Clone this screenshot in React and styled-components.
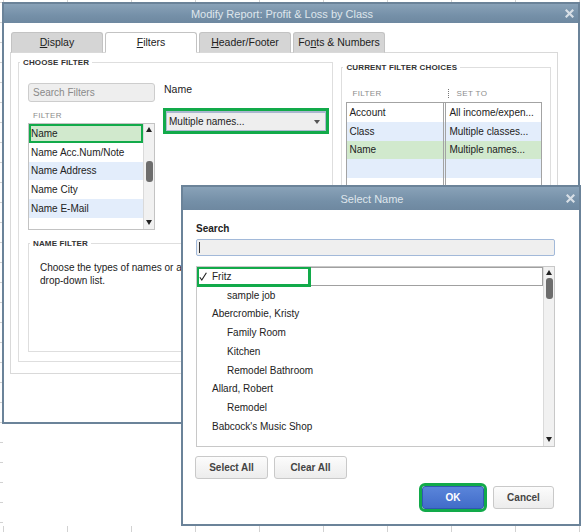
import React from 'react';
import styled, { createGlobalStyle } from 'styled-components';

const FONT = '"Liberation Sans", Arial, Helvetica, sans-serif';
const GREEN = '#12aa4a';

const tones = { plain: '#ffffff', blue: '#e3edfb', picked: '#d1e9cd' };

const filterChoices = [
  { label: 'Name', tone: 'picked' },
  { label: 'Name Acc.Num/Note', tone: 'plain' },
  { label: 'Name Address', tone: 'blue' },
  { label: 'Name City', tone: 'plain' },
  { label: 'Name E-Mail', tone: 'blue' },
];

const currentChoices = [
  { filter: 'Account', value: 'All income/expen...', tone: 'plain' },
  { filter: 'Class', value: 'Multiple classes...', tone: 'blue' },
  { filter: 'Name', value: 'Multiple names...', tone: 'picked' },
  { filter: '', value: '', tone: 'blue' },
  { filter: '', value: '', tone: 'plain' },
  { filter: '', value: '', tone: 'blue' },
];

const names = [
  { label: 'Fritz', level: 0, checked: true },
  { label: 'sample job', level: 1 },
  { label: 'Abercrombie, Kristy', level: 0 },
  { label: 'Family Room', level: 1 },
  { label: 'Kitchen', level: 1 },
  { label: 'Remodel Bathroom', level: 1 },
  { label: 'Allard, Robert', level: 0 },
  { label: 'Remodel', level: 1 },
  { label: "Babcock's Music Shop", level: 0 },
];

const GlobalStyle = createGlobalStyle`
  html, body {
    margin: 0;
    padding: 0;
  }
  body {
    font-family: ${FONT};
    font-size: 10px;
    color: #222;
    background: #fff;
  }
`;

// sheet behind the dialogs: only the gridline stubs at its edges show
const Desktop = styled.div`
  position: relative;
  width: 583px;
  height: 532px;
  overflow: hidden;
  background-color: #fff;
  background-image:
    linear-gradient(to bottom, #d2d2d2 1px, transparent 1px),
    linear-gradient(to right, #d2d2d2 1px, transparent 1px),
    linear-gradient(to right, #d2d2d2 1px, transparent 1px);
  background-size: 3px 20px, 64px 2px, 64px 6px;
  background-position: 0 2px, 3px 0, 3px 526px;
  background-repeat: repeat-y, repeat-x, repeat-x;
`;

const Window = styled.section`
  position: absolute;
  left: ${(p) => p.$x}px;
  top: ${(p) => p.$y}px;
  width: ${(p) => p.$w}px;
  height: ${(p) => p.$h}px;
  box-sizing: border-box;
  border: 2px solid #6b8399;
  background: #fff;
  display: flex;
  flex-direction: column;
`;

const TitleBar = styled.header`
  flex: none;
  height: ${(p) => p.$h}px;
  display: flex;
  align-items: center;
  background: linear-gradient(#89a2b8, #7590a8 60%, #6e88a0);
  color: #dfe6ec;
  font-size: 11px;
`;

const TitleText = styled.span`
  flex: 1;
  text-align: center;
`;

const CloseBox = styled.span`
  width: 18px;
  flex: none;
  display: flex;
  justify-content: center;
  align-items: center;
`;

const DialogBody = styled.div`
  flex: 1;
  padding: 9px 6px 0;
  display: flex;
  flex-direction: column;
`;

const TabStrip = styled.div`
  display: flex;
  gap: 2px;
  padding-left: 1px;
  height: 20px;
  position: relative;
  z-index: 1;
`;

const Tab = styled.div`
  width: 92px;
  height: 21px;
  box-sizing: border-box;
  border: 1px solid #c3c3c3;
  border-bottom: 1px solid ${(p) => (p.$active ? '#fff' : '#d9d9d9')};
  border-radius: 3px 3px 0 0;
  background: ${(p) => (p.$active ? '#fff' : '#d5d5d5')};
  display: flex;
  align-items: center;
  justify-content: center;
  padding-bottom: 2px;
  font-size: 10.5px;
  color: #222;
`;

const TabPanel = styled.div`
  width: 548px;
  height: 322px;
  box-sizing: border-box;
  border: 1px solid #d9d9d9;
  padding: 5px 6px 0 7px;
  display: flex;
  align-items: flex-start;
  gap: 8px;
`;

const GroupBox = styled.fieldset`
  margin: ${(p) => p.$margin || 0};
  padding: 0;
  min-width: 0;
  box-sizing: border-box;
  width: ${(p) => p.$w}px;
  height: ${(p) => p.$h}px;
  border: 1px solid #dedede;
`;

const Legend = styled.legend`
  margin-left: 1px;
  padding: 0 3px;
  font-size: 8px;
  line-height: 9px;
  font-weight: bold;
  color: #333;
  letter-spacing: 0.15px;
`;

const GroupInner = styled.div`
  padding: ${(p) => p.$pad};
`;

const FilterColumns = styled.div`
  display: grid;
  grid-template-columns: 127px 162px;
  column-gap: 9px;
  align-items: start;
`;

const Column = styled.div`
  display: flex;
  flex-direction: column;
`;

const SearchFilters = styled.div`
  height: 19px;
  box-sizing: border-box;
  border: 1px solid #cdcdcd;
  border-radius: 3px;
  background: #eeeeee;
  color: #8a8a8a;
  display: flex;
  align-items: center;
  padding-left: 4px;
  font-size: 10px;
`;

const Caption = styled.div`
  margin: 9px 0 2px 5px;
  font-size: 8px;
  line-height: 10px;
  color: #8c8c8c;
  letter-spacing: 0.3px;
`;

const ListBox = styled.div`
  height: ${(p) => p.$h}px;
  box-sizing: border-box;
  border: 1px solid #c3c3c3;
  display: flex;
  overflow: hidden;
  background: #fff;
`;

const Rows = styled.div`
  flex: 1;
  display: flex;
  flex-direction: column;
`;

const FilterRow = styled.div`
  height: 18.75px;
  flex: none;
  display: flex;
  align-items: center;
  padding-left: 2px;
  background: ${(p) => tones[p.$tone]};
  font-size: 10px;
  color: #222;
  ${(p) => p.$marked && `outline: 3px solid ${GREEN}; outline-offset: -2px;`}
`;

const ScrollBar = styled.div`
  width: 11px;
  flex: none;
  background: #f1f1f1;
  border-left: 1px solid #dadada;
  display: flex;
  flex-direction: column;
  align-items: center;
  padding: 3px 0 4px;
  box-sizing: border-box;
`;

const Arrow = styled.span`
  width: 0;
  height: 0;
  flex: none;
  border-left: 3.5px solid transparent;
  border-right: 3.5px solid transparent;
  ${(p) => (p.$down ? 'border-top: 5px solid #222;' : 'border-bottom: 5px solid #222;')}
`;

const Thumb = styled.span`
  width: 7px;
  height: 21px;
  flex: none;
  margin-top: ${(p) => p.$offset}px;
  border-radius: 3px;
  background: #6d6d6d;
`;

const Spacer = styled.span`
  flex: 1;
`;

const FieldLabel = styled.div`
  font-size: 10.5px;
  line-height: 12px;
  color: #222;
`;

const DropDown = styled.div`
  margin: 16px 0 0 2px;
  width: 160px;
  height: 20px;
  box-sizing: border-box;
  border: 1px solid #aebad0;
  border-top: 2px solid #aab7cf;
  background: #eeeeee;
  display: flex;
  align-items: center;
  justify-content: space-between;
  padding: 0 5px 0 2px;
  font-size: 10px;
  color: #222;
  outline: 3px solid ${GREEN};
`;

const Caret = styled.span`
  width: 0;
  height: 0;
  border-left: 3.5px solid transparent;
  border-right: 3.5px solid transparent;
  border-top: 4px solid #555;
`;

const Hint = styled.p`
  margin: 0;
  font-size: 10px;
  line-height: 13px;
  color: #222;
`;

const ChoiceHeader = styled.div`
  display: grid;
  grid-template-columns: 102px 1fr;
  height: 12px;
  align-items: center;
  font-size: 8px;
  color: #8c8c8c;
  letter-spacing: 0.4px;
`;

const HeaderCell = styled.span`
  display: flex;
  align-items: center;
  padding-left: ${(p) => p.$pad}px;
`;

const Dotted = styled.span`
  width: 0;
  height: 9px;
  border-left: 1px dotted #777;
  margin: 0 7px 0 0;
`;

const ChoiceTable = styled.div`
  margin-top: 3px;
  width: 194px;
  border: 1px solid #a3a3a3;
  border-bottom: none;
`;

const ChoiceRow = styled.div`
  display: grid;
  grid-template-columns: 99px 1fr;
  height: 18.75px;
  background: ${(p) => tones[p.$tone]};
  font-size: 10px;
  color: #222;
`;

const ChoiceCell = styled.span`
  display: flex;
  align-items: center;
  padding-left: ${(p) => (p.$first ? 2 : 3)}px;
  white-space: nowrap;
  overflow: hidden;
  ${(p) => p.$first && 'border-right: 3px double #a3a3a3;'}
`;

/* Select Name dialog */

const PickerBody = styled.div`
  flex: 1;
  padding: 13px 24px 0 13px;
  display: flex;
  flex-direction: column;
`;

const BoldLabel = styled.div`
  font-size: 10px;
  line-height: 12px;
  font-weight: bold;
  color: #222;
`;

const SearchField = styled.div`
  margin-top: 4px;
  height: 17px;
  box-sizing: border-box;
  border: 1px solid #a2b9d9;
  border-radius: 2px;
  background: #efefef;
  display: flex;
  align-items: center;
  padding-left: 2px;
`;

const TextCursor = styled.span`
  width: 1px;
  height: 11px;
  background: #333;
`;

const NameList = styled(ListBox)`
  margin-top: 10px;
  border-color: #c8c8c8;
`;

const NameRow = styled.div`
  height: 18.75px;
  flex: none;
  box-sizing: border-box;
  display: flex;
  align-items: center;
  border: 1px solid ${(p) => (p.$focused ? '#a0a0a0' : 'transparent')};
  font-size: 10px;
  color: #222;
`;

const Marked = styled.span`
  align-self: stretch;
  width: 111px;
  display: flex;
  align-items: center;
  outline: 3px solid ${GREEN};
  outline-offset: -1px;
`;

const CheckCell = styled.span`
  width: 14px;
  flex: none;
  display: flex;
  align-items: center;
  padding-left: 1px;
  box-sizing: border-box;
`;

const NameText = styled.span`
  padding-left: ${(p) => p.$level * 15}px;
  white-space: nowrap;
`;

const ButtonRow = styled.div`
  display: flex;
  gap: ${(p) => p.$gap}px;
  margin-top: ${(p) => p.$top}px;
  justify-content: ${(p) => (p.$end ? 'flex-end' : 'flex-start')};
  padding-right: ${(p) => (p.$end ? 1 : 0)}px;
  margin-left: ${(p) => (p.$end ? 0 : -1)}px;
`;

const Button = styled.button`
  width: ${(p) => p.$w}px;
  height: 23px;
  box-sizing: border-box;
  margin: 0;
  padding: 0;
  border: 1px solid ${(p) => (p.$primary ? '#2f58b0' : '#c9c9c9')};
  border-radius: 3px;
  background: ${(p) =>
    p.$primary
      ? 'linear-gradient(#5a85da, #416cc9)'
      : 'linear-gradient(#fcfcfc, #ececec)'};
  color: ${(p) => (p.$primary ? '#fff' : '#444')};
  font-family: ${FONT};
  font-size: 10px;
  font-weight: bold;
  ${(p) => p.$marked && `outline: 3px solid ${GREEN}; outline-offset: 0px;`}
`;

function CloseIcon() {
  return (
    <svg width="9" height="9" viewBox="0 0 9 9">
      <path d="M1.5 1.5 L7.5 7.5 M7.5 1.5 L1.5 7.5" stroke="#d8dfe6" strokeWidth="2.2" strokeLinecap="square" />
    </svg>
  );
}

function CheckMark() {
  return (
    <svg width="8" height="9" viewBox="0 0 8 9">
      <path d="M0.8 5.2 L2.8 8 L7.4 0.8" fill="none" stroke="#222" strokeWidth="1.1" />
    </svg>
  );
}

function Scroller({ offset }) {
  return (
    <ScrollBar>
      <Arrow />
      <Thumb $offset={offset} />
      <Spacer />
      <Arrow $down />
    </ScrollBar>
  );
}

function ModifyReport() {
  return (
    <Window $x={2} $y={2} $w={578} $h={422}>
      <TitleBar $h={19}>
        <TitleText>Modify Report: Profit &amp; Loss by Class</TitleText>
        <CloseBox><CloseIcon /></CloseBox>
      </TitleBar>
      <DialogBody>
        <TabStrip>
          <Tab><span><u>D</u>isplay</span></Tab>
          <Tab $active><span><u>F</u>ilters</span></Tab>
          <Tab><span><u>H</u>eader/Footer</span></Tab>
          <Tab><span>Fo<u>n</u>ts &amp; Numbers</span></Tab>
        </TabStrip>
        <TabPanel>
          <GroupBox $w={316} $h={304}>
            <Legend>CHOOSE FILTER</Legend>
            <GroupInner $pad="16px 9px 0">
              <FilterColumns>
                <Column>
                  <SearchFilters>Search Filters</SearchFilters>
                  <Caption>FILTER</Caption>
                  <ListBox $h={107}>
                    <Rows>
                      {filterChoices.map((row) => (
                        <FilterRow key={row.label} $tone={row.tone} $marked={row.tone === 'picked'}>
                          {row.label}
                        </FilterRow>
                      ))}
                    </Rows>
                    <Scroller offset={29} />
                  </ListBox>
                </Column>
                <Column>
                  <FieldLabel>Name</FieldLabel>
                  <DropDown>
                    <span>Multiple names...</span>
                    <Caret />
                  </DropDown>
                </Column>
              </FilterColumns>
              <GroupBox $w={295} $h={113} $margin="9px 0 0">
                <Legend>NAME FILTER</Legend>
                <GroupInner $pad="13px 11px 0">
                  <Hint>
                    Choose the types of names or a
                    <br />
                    drop-down list.
                  </Hint>
                </GroupInner>
              </GroupBox>
            </GroupInner>
          </GroupBox>
          <GroupBox $w={210} $h={298} $margin="5px 0 0">
            <Legend>CURRENT FILTER CHOICES</Legend>
            <GroupInner $pad="15px 4px 0">
              <ChoiceHeader>
                <HeaderCell $pad={6}>FILTER</HeaderCell>
                <HeaderCell $pad={0}>
                  <Dotted />
                  SET TO
                </HeaderCell>
              </ChoiceHeader>
              <ChoiceTable>
                {currentChoices.map((row, i) => (
                  <ChoiceRow key={i} $tone={row.tone}>
                    <ChoiceCell $first>{row.filter}</ChoiceCell>
                    <ChoiceCell>{row.value}</ChoiceCell>
                  </ChoiceRow>
                ))}
              </ChoiceTable>
            </GroupInner>
          </GroupBox>
        </TabPanel>
      </DialogBody>
    </Window>
  );
}

function SelectName() {
  return (
    <Window $x={181} $y={185} $w={400} $h={341}>
      <TitleBar $h={23}>
        <TitleText>Select Name</TitleText>
        <CloseBox><CloseIcon /></CloseBox>
      </TitleBar>
      <PickerBody>
        <BoldLabel>Search</BoldLabel>
        <SearchField>
          <TextCursor />
        </SearchField>
        <NameList $h={181}>
          <Rows>
            {names.map((n) =>
              n.checked ? (
                <NameRow key={n.label} $focused>
                  <Marked>
                    <CheckCell><CheckMark /></CheckCell>
                    <NameText $level={n.level}>{n.label}</NameText>
                  </Marked>
                </NameRow>
              ) : (
                <NameRow key={n.label}>
                  <CheckCell />
                  <NameText $level={n.level}>{n.label}</NameText>
                </NameRow>
              )
            )}
          </Rows>
          <Scroller offset={3} />
        </NameList>
        <ButtonRow $gap={6} $top={9}>
          <Button $w={73}>Select All</Button>
          <Button $w={73}>Clear All</Button>
        </ButtonRow>
        <ButtonRow $gap={9} $top={7} $end>
          <Button $w={62} $primary $marked>OK</Button>
          <Button $w={61}>Cancel</Button>
        </ButtonRow>
      </PickerBody>
    </Window>
  );
}

export default function App() {
  return (
    <>
      <GlobalStyle />
      <Desktop>
        <ModifyReport />
        <SelectName />
      </Desktop>
    </>
  );
}
